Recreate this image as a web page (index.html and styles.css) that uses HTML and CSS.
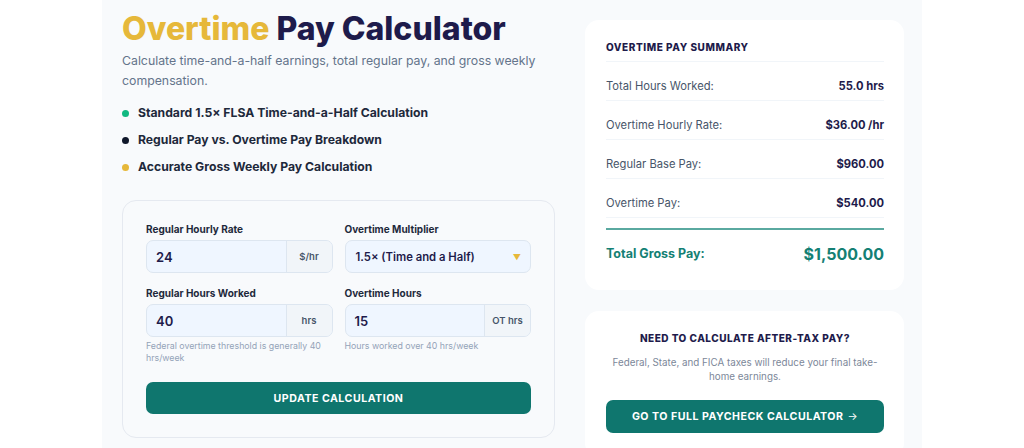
FILE: index.html
```html
<!DOCTYPE html>
<html lang="en">
<head>
<meta charset="utf-8">
<title>Overtime Pay Calculator</title>
<link rel="stylesheet" href="styles.css">
</head>
<body>
<div class="page">
  <main class="left">
    <h1 class="title"><span class="gold">Overtime</span> Pay Calculator</h1>
    <p class="subtitle">Calculate time-and-a-half earnings, total regular pay, and gross weekly compensation.</p>
    <ul class="features">
      <li><span class="dot dot-green"></span>Standard 1.5× FLSA Time-and-a-Half Calculation</li>
      <li><span class="dot dot-navy"></span>Regular Pay vs. Overtime Pay Breakdown</li>
      <li><span class="dot dot-gold"></span>Accurate Gross Weekly Pay Calculation</li>
    </ul>
    <form class="calc">
      <div class="grid">
        <div class="field">
          <label class="label">Regular Hourly Rate</label>
          <div class="input-group">
            <span class="input">24</span>
            <span class="addon">$/hr</span>
          </div>
        </div>
        <div class="field">
          <label class="label">Overtime Multiplier</label>
          <div class="select">
            <span>1.5× (Time and a Half)</span>
            <span class="caret">▼</span>
          </div>
        </div>
        <div class="field">
          <label class="label">Regular Hours Worked</label>
          <div class="input-group">
            <span class="input">40</span>
            <span class="addon">hrs</span>
          </div>
          <p class="help">Federal overtime threshold is generally 40 hrs/week</p>
        </div>
        <div class="field">
          <label class="label">Overtime Hours</label>
          <div class="input-group">
            <span class="input">15</span>
            <span class="addon">OT hrs</span>
          </div>
          <p class="help">Hours worked over 40 hrs/week</p>
        </div>
      </div>
      <div class="btn btn-full">UPDATE CALCULATION</div>
    </form>
  </main>
  <aside class="right">
    <section class="card summary">
      <h2 class="card-title">OVERTIME PAY SUMMARY</h2>
      <div class="row"><span class="row-label">Total Hours Worked:</span><span class="row-value">55.0 hrs</span></div>
      <div class="row"><span class="row-label">Overtime Hourly Rate:</span><span class="row-value">$36.00 /hr</span></div>
      <div class="row"><span class="row-label">Regular Base Pay:</span><span class="row-value">$960.00</span></div>
      <div class="row"><span class="row-label">Overtime Pay:</span><span class="row-value">$540.00</span></div>
      <div class="total"><span class="total-label">Total Gross Pay:</span><span class="total-value">$1,500.00</span></div>
    </section>
    <section class="card cta">
      <h2 class="cta-title">NEED TO CALCULATE AFTER-TAX PAY?</h2>
      <p class="cta-text">Federal, State, and FICA taxes will reduce your final take-home earnings.</p>
      <div class="btn">GO TO FULL PAYCHECK CALCULATOR <span class="arrow">→</span></div>
    </section>
  </aside>
</div>
</body>
</html>
```
FILE: styles.css
```css
* { box-sizing: border-box; }
html, body { margin: 0; padding: 0; }
body {
  background: #ffffff;
  font-family: Inter, "Noto Sans", "Liberation Sans", sans-serif;
  color: #1e293b;
}
.page {
  width: 820px;
  margin: 0 auto;
  min-height: 448px;
  background: #f8fafc;
  padding: 10px 18px 0 20px;
  display: flex;
  gap: 30px;
  align-items: flex-start;
}
.left { width: 433px; flex: none; }
.right { width: 319px; flex: none; padding-top: 10px; display: flex; flex-direction: column; gap: 21px; }

.title {
  margin: 0;
  font-size: 32px;
  line-height: 38px;
  font-weight: 800;
  color: #1e1b4b;
}
.gold { color: #e6b83a; }
.subtitle {
  margin: 3px 0 0;
  font-size: 12.3px;
  line-height: 19.5px;
  color: #64748b;
}
.features {
  list-style: none;
  margin: 13px 0 0;
  padding: 0;
  display: flex;
  flex-direction: column;
  gap: 7px;
}
.features li {
  display: flex;
  align-items: center;
  font-size: 12.2px;
  line-height: 20px;
  font-weight: 700;
  color: #1e293b;
}
.dot {
  width: 7px; height: 7px; border-radius: 50%;
  margin: 0 9px 0 0;
  flex: none;
}
.dot-green { background: #10b981; }
.dot-navy { background: #0f172a; }
.dot-gold { background: #e6b83a; }

.calc {
  margin-top: 23px;
  border: 1px solid #e5e9f0;
  border-radius: 14px;
  background: #f8fafc;
  padding: 21px 23px 23px;
}
.grid {
  display: grid;
  grid-template-columns: 1fr 1fr;
  column-gap: 12px;
  row-gap: 13px;
}
.label {
  display: block;
  font-size: 10px;
  line-height: 14px;
  font-weight: 700;
  color: #1e293b;
  margin-bottom: 4px;
}
.input-group {
  display: flex;
  height: 33px;
  border: 1px solid #dde6f0;
  border-radius: 7px;
  overflow: hidden;
  background: #eff6ff;
}
.input {
  flex: 1;
  display: flex;
  align-items: center;
  padding-left: 9px;
  font-size: 13px;
  font-weight: 600;
  color: #1e1b4b;
}
.addon {
  display: flex;
  align-items: center;
  justify-content: center;
  width: 46px;
  background: #f1f5f9;
  border-left: 1px solid #dde6f0;
  font-size: 9.5px;
  font-weight: 600;
  color: #475569;
}
.select {
  height: 33px;
  border: 1px solid #dde6f0;
  border-radius: 7px;
  background: #eff6ff;
  display: flex;
  align-items: center;
  justify-content: space-between;
  padding: 0 9px 0 10px;
  font-size: 11.3px;
  font-weight: 600;
  color: #1e1b4b;
}
.caret { color: #e6b83a; font-size: 8px; }
.help {
  margin: 3px 0 0;
  font-size: 8.8px;
  line-height: 12px;
  color: #94a3b8;
}
.btn {
  height: 33px;
  border-radius: 7px;
  background: #0f766e;
  color: #ffffff;
  font-size: 10.6px;
  font-weight: 700;
  letter-spacing: 0.5px;
  display: flex;
  align-items: center;
  justify-content: center;
}
.btn-full { margin-top: 18px; height: 32px; }
.arrow { font-weight: 400; margin-left: 4px; }

.card {
  background: #ffffff;
  border-radius: 14px;
  padding: 20px 20px 20px 21px;
}
.card-title {
  margin: 0;
  font-size: 10px;
  line-height: 14px;
  font-weight: 800;
  letter-spacing: 0.55px;
  color: #1e1b4b;
  padding-bottom: 7px;
  border-bottom: 1px solid #f1f5f9;
}
.row {
  display: flex;
  justify-content: space-between;
  align-items: center;
  padding: 17px 0 7px;
  line-height: 14px;
  border-bottom: 1px solid #f1f5f9;
}
.row-label { font-size: 11.2px; color: #475569; }
.row-value { font-size: 11.2px; font-weight: 700; color: #1e1b4b; }
.total {
  margin-top: 10px;
  border-top: 2px solid #5aa9a0;
  padding: 12px 0 4px;
  display: flex;
  justify-content: space-between;
  align-items: center;
  line-height: 24px;
}
.total-label { font-size: 12.5px; font-weight: 700; color: #148074; }
.total-value { font-size: 16px; font-weight: 700; color: #148074; }

.cta { text-align: center; padding-bottom: 24px; }
.cta-title {
  margin: 0;
  font-size: 10px;
  line-height: 14px;
  font-weight: 800;
  letter-spacing: 0.5px;
  color: #1e1b4b;
}
.cta-text {
  margin: 11px 0 0;
  font-size: 9.8px;
  line-height: 14px;
  color: #7c8799;
  padding: 0 4px;
}
.cta .btn { margin-top: 16px; }
```
